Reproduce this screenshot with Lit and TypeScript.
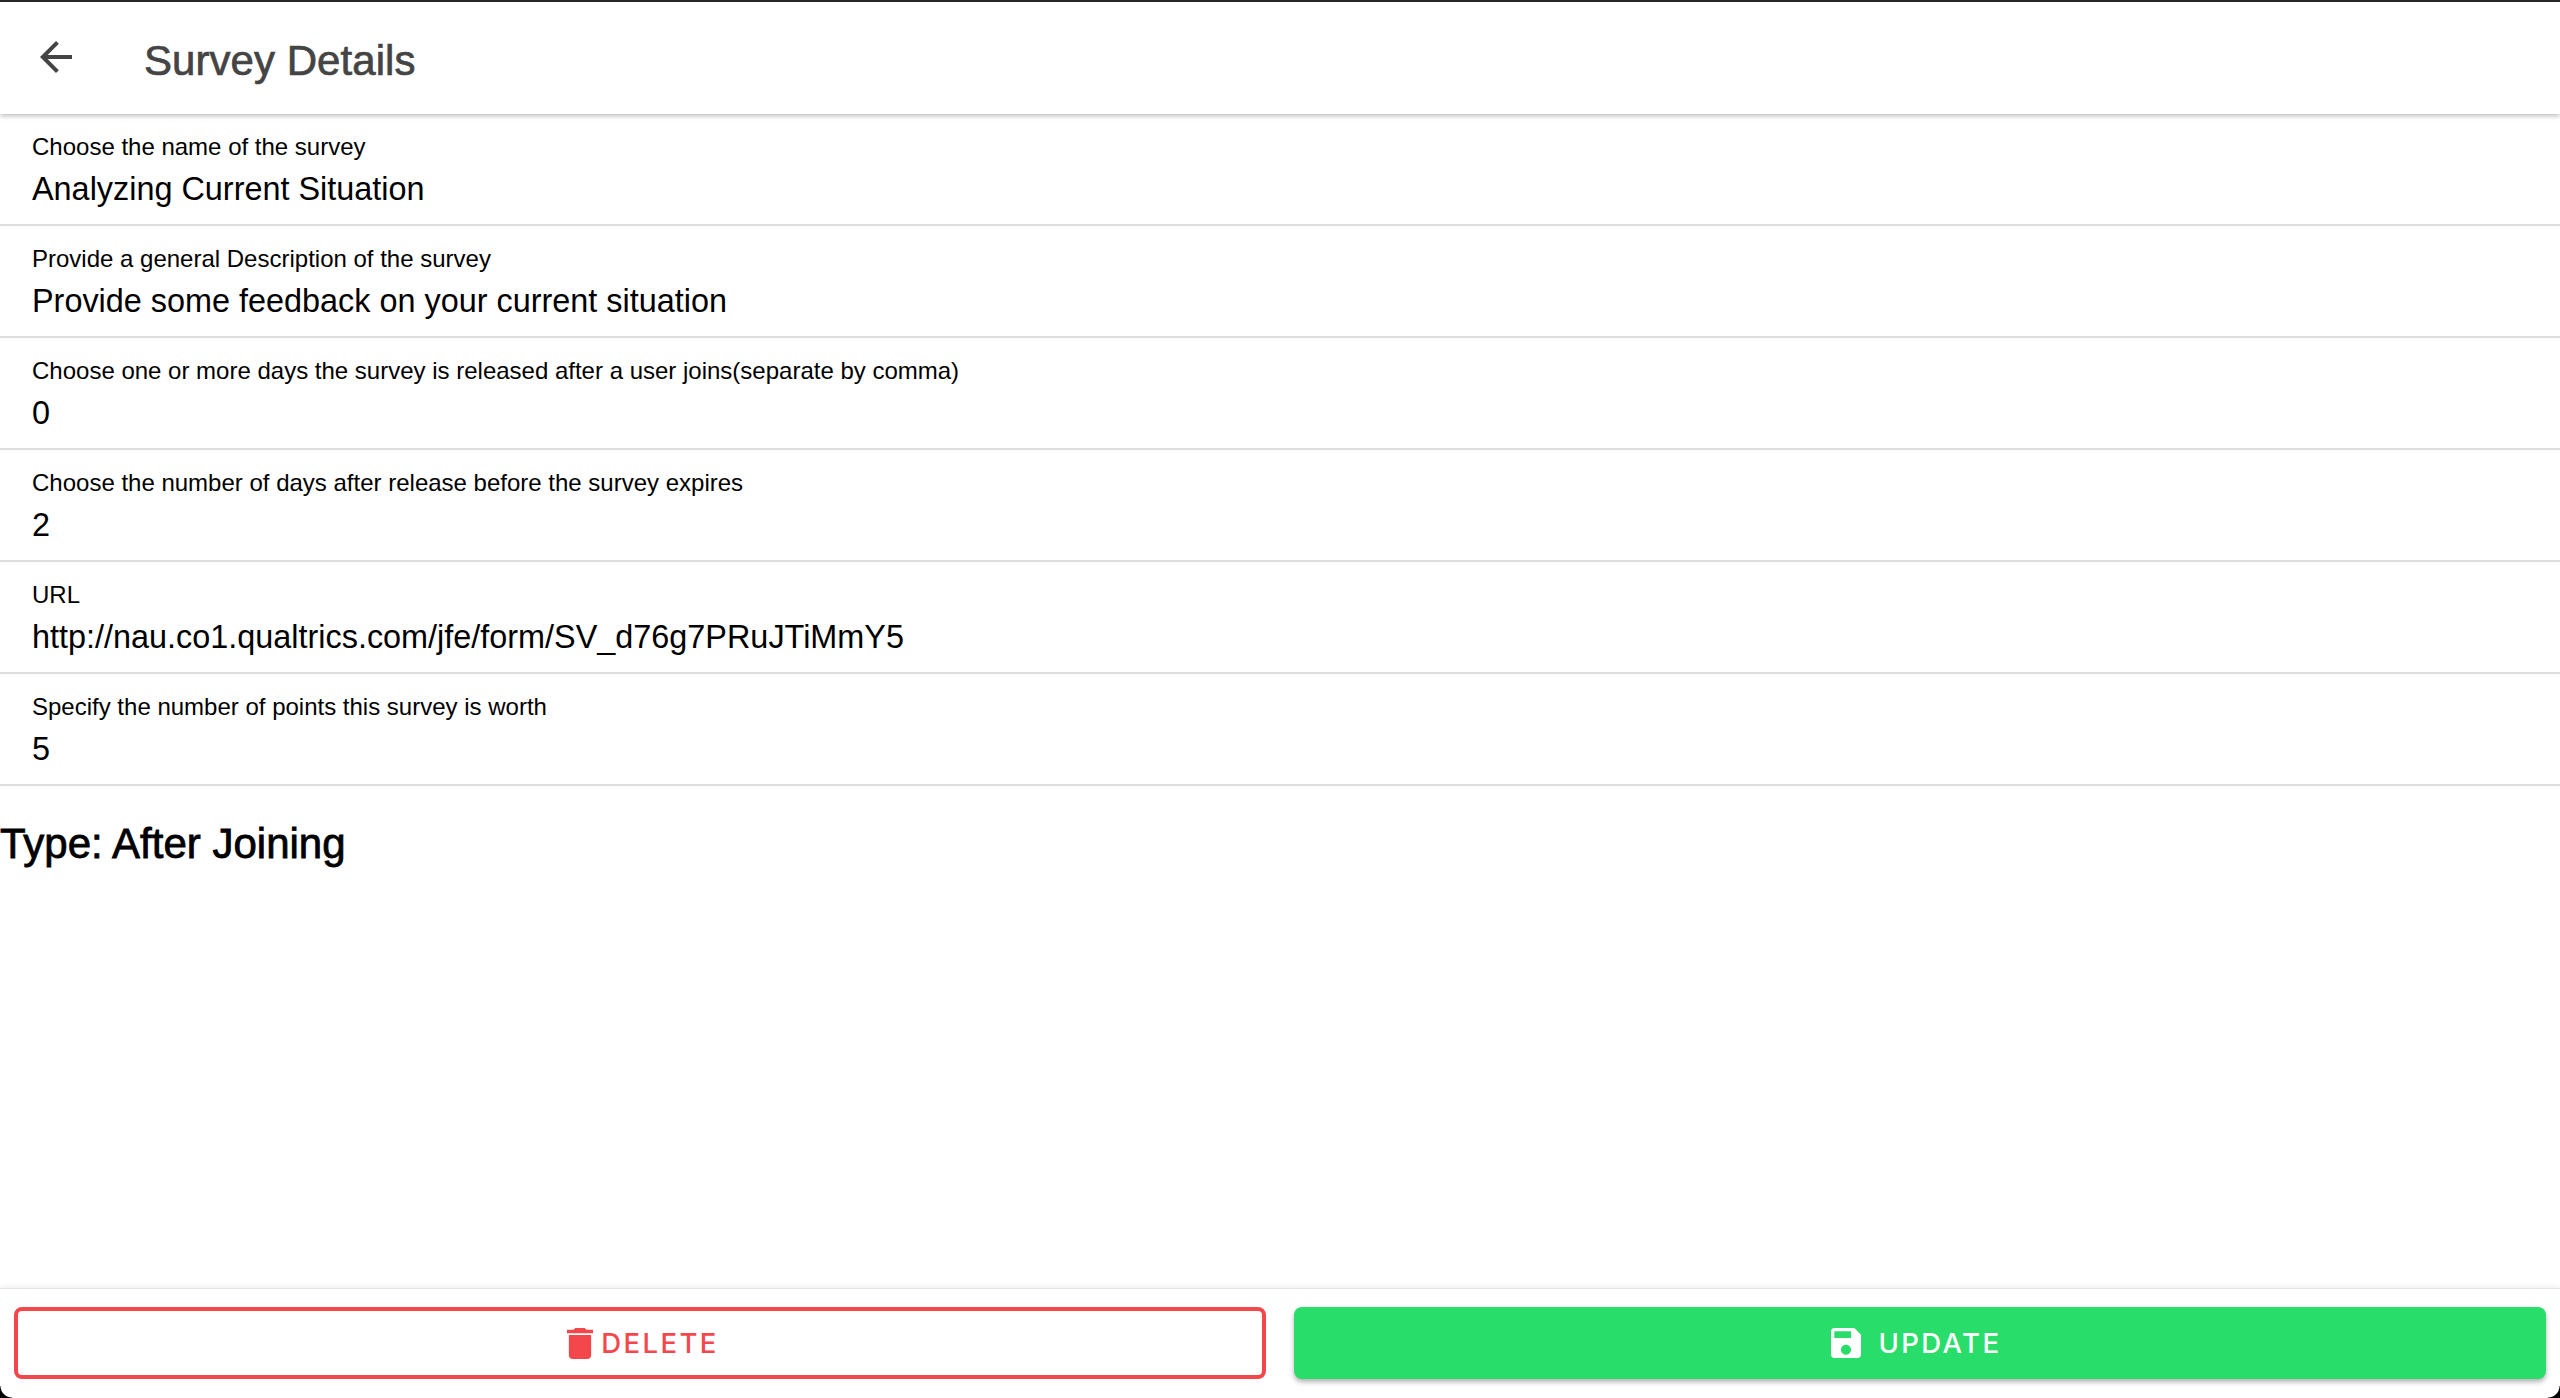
import { LitElement, html, css } from "lit";
import { customElement } from "lit/decorators.js";

const rows: [string, string][] = [
  ["Choose the name of the survey", "Analyzing Current Situation"],
  ["Provide a general Description of the survey", "Provide some feedback on your current situation"],
  ["Choose one or more days the survey is released after a user joins(separate by comma)", "0"],
  ["Choose the number of days after release before the survey expires", "2"],
  ["URL", "http://nau.co1.qualtrics.com/jfe/form/SV_d76g7PRuJTiMmY5"],
  ["Specify the number of points this survey is worth", "5"],
];

@customElement("app-root")
export class AppRoot extends LitElement {
  static styles = css`
    :host {
      display: block;
      height: 1398px;
      background: #fff;
      font-family: "Liberation Sans", Arial, sans-serif;
      overflow: hidden;
    }
    .page {
      position: relative;
      height: 1398px;
      display: flex;
      flex-direction: column;
      background: #fff;
      overflow: hidden;
    }
    .topline { height: 2px; background: #2a2a2a; flex: none; }
    header {
      flex: none;
      height: 112px;
      display: flex;
      align-items: center;
      background: #fff;
      box-shadow: 0 2px 5px rgba(0, 0, 0, 0.26);
      position: relative;
      z-index: 1;
      color: #444;
    }
    .back { width: 48px; height: 48px; margin-left: 32px; margin-top: -2px; display: block; fill: #444; flex: none; }
    h1 {
      margin: 6px 0 0 64px;
      font-size: 42px;
      line-height: 50px;
      font-weight: 500;
      letter-spacing: 0.05px;
      -webkit-text-stroke: 0.7px #444;
      color: #444;
    }
    main { flex: 1; min-height: 0; }
    .row {
      height: 112px;
      box-sizing: border-box;
      padding: 20px 32px 0;
      border-bottom: 2px solid #ddd;
      color: #000;
    }
    .label { font-size: 24px; line-height: 26px; }
    .value { font-size: 32.4px; line-height: 40px; margin-top: 9px; }
    .type {
      margin: 33px 0 0;
      font-size: 42px;
      line-height: 50px;
      font-weight: 500;
      -webkit-text-stroke: 0.8px #000;
      color: #000;
    }
    footer {
      flex: none;
      height: 110px;
      box-sizing: border-box;
      border-top: 1px solid #e3e3e3;
      box-shadow: 0 -2px 4px rgba(0, 0, 0, 0.06);
      padding: 18px 14px 0;
      display: grid;
      grid-template-columns: 1252px 1252px;
      justify-content: space-between;
      align-items: start;
    }
    button {
      height: 72px;
      border-radius: 8px;
      font-family: "Inter", "Liberation Sans", sans-serif;
      font-size: 27.5px;
      font-weight: 500;
      letter-spacing: 2.4px;
      display: flex;
      align-items: center;
      justify-content: center;
      padding: 0;
      box-sizing: border-box;
    }
    .del { background: #fff; border: 4px solid #f4474c; color: #f4474c; gap: 8px; padding-left: 6px; }
    .upd {
      background: #29dd6a;
      border: none;
      color: #fff;
      gap: 18px;
      padding-right: 8px;
      box-shadow: 0 3px 5px rgba(0, 0, 0, 0.3);
    }
    svg.btn { display: block; fill: currentColor; flex: none; }
    .corner { position: absolute; bottom: 0; width: 12px; height: 12px; }
    .corner.l { left: 0; background: radial-gradient(circle at 100% 0, transparent 11px, #000 12px); }
    .corner.r { right: 0; background: radial-gradient(circle at 0 0, transparent 11px, #000 12px); }
  `;

  render() {
    return html`<div class="page">
      <div class="topline"></div>
      <header>
        <svg class="back" viewBox="0 0 24 24"><path d="M20 11H7.83l5.59-5.59L12 4l-8 8 8 8 1.41-1.41L7.83 13H20v-2z"/></svg>
        <h1>Survey Details</h1>
      </header>
      <main>
        ${rows.map(
          ([l, v]) => html`<div class="row"><div class="label">${l}</div><div class="value">${v}</div></div>`
        )}
        <h2 class="type">Type: After Joining</h2>
      </main>
      <footer>
        <button class="del">
          <svg class="btn" width="26" height="31" viewBox="5 3 14 18" preserveAspectRatio="none"><path d="M6 19c0 1.1.9 2 2 2h8c1.1 0 2-.9 2-2V7H6v12zM19 4h-3.5l-1-1h-5l-1 1H5v2h14V4z"/></svg>
          DELETE
        </button>
        <button class="upd">
          <svg class="btn" width="30" height="30" viewBox="3 3 18 18"><path d="M17 3H5c-1.11 0-2 .9-2 2v14c0 1.1.89 2 2 2h14c1.1 0 2-.9 2-2V7l-4-4zm-5 16c-1.66 0-3-1.34-3-3s1.34-3 3-3 3 1.34 3 3-1.34 3-3 3zm3-10H5V5h10v4z"/></svg>
          UPDATE
        </button>
      </footer>
      <div class="corner l"></div>
      <div class="corner r"></div>
    </div>`;
  }
}
